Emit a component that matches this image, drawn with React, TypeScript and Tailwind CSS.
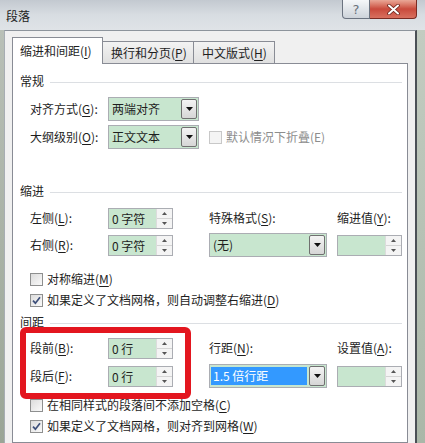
const Key = ({k}: {k: string}) => <span className="underline underline-offset-[2px]">{k}</span>

const Label = ({text, k, colon = true}: {text: string, k: string, colon?: boolean}) => (
    <span className="whitespace-nowrap">{text}(<Key k={k}/>){colon ? ":" : ""}</span>
)

const Heading = ({title}: {title: string}) => (
    <div className="flex items-center h-[16px] gap-[6px]">
        <span className="leading-[16px]">{title}</span>
        <div className="flex-1 h-px bg-[#dcdfe3] mt-[2px]"/>
    </div>
)

const Up = () => (
    <svg width="5" height="3" viewBox="0 0 5 3"><path d="M0 3 L2.5 0 L5 3 Z" fill="#555"/></svg>
)
const Down = () => (
    <svg width="5" height="3" viewBox="0 0 5 3"><path d="M0 0 L5 0 L2.5 3 Z" fill="#555"/></svg>
)

const Spin = ({value}: {value?: string}) => (
    <div className="flex w-[65px] h-[21px] border border-[#abadb3] bg-[#c8e6cf]">
        <div className="flex-1 pl-[3px] leading-[19px] whitespace-nowrap">{value}</div>
        <div className="w-[16px] flex flex-col bg-[#f4f4f4] border-l border-[#dcdcdc]">
            <div className="flex-1 flex items-center justify-center border-b border-[#d4d4d4]"><Up/></div>
            <div className="flex-1 flex items-center justify-center"><Down/></div>
        </div>
    </div>
)

const Dropdown = ({value, className, selected}: {value: string, className: string, selected?: boolean}) => (
    <div className={`flex h-[24px] border border-[#abadb3] bg-[#c8e6cf] ${className}`}>
        <div className="flex-1 flex items-center pl-[1px] pr-[2px]">
            {selected
                ? <span className="flex-1 bg-[#3399ff] text-white leading-[18px] pl-[2px]">{value}</span>
                : <span className="pl-[2px] leading-[18px]">{value}</span>}
        </div>
        <div className="w-[16px] my-px mr-px border border-[#707070] rounded-[2px] bg-gradient-to-b from-[#f4f4f4] to-[#d6d6d6] flex items-center justify-center">
            <svg width="7" height="4" viewBox="0 0 7 4"><path d="M0 0 L7 0 L3.5 4 Z" fill="#111"/></svg>
        </div>
    </div>
)

const Check = ({checked, disabled}: {checked?: boolean, disabled?: boolean}) => (
    <div className={`w-[13px] h-[13px] border flex items-center justify-center shrink-0 ${disabled ? "border-[#c8c8c8] bg-[#f4f4f4]" : "border-[#8e8f8f] bg-gradient-to-br from-[#dcdcdc] to-[#fafafa]"}`}>
        {checked && (
            <svg width="9" height="9" viewBox="0 0 9 9">
                <path d="M1 4.6 L3.4 7.2 L8 1.2" fill="none" stroke="#3d4f7a" strokeWidth="1.7"/>
            </svg>
        )}
    </div>
)

const CheckRow = ({checked, children, className}: {checked?: boolean, children: React.ReactNode, className: string}) => (
    <div className={`flex items-center gap-[4px] ml-[10px] h-[18px] whitespace-nowrap ${className}`}>
        <Check checked={checked}/>
        <span className="leading-[18px]">{children}</span>
    </div>
)

const Row = ({children, className}: {children: React.ReactNode, className: string}) => (
    <div className={`grid grid-cols-[78px_101px_128px_65px] items-center ml-[10px] ${className}`}>{children}</div>
)

export default function App() {
    return (
        <div className="w-[425px] h-[443px] overflow-hidden relative flex flex-col bg-[#d5dade] text-[12px] text-[#1e1e1e] font-['Noto_Sans_CJK_SC',sans-serif]">
            {/* title bar */}
            <div className="h-[30px] shrink-0 flex items-start bg-gradient-to-b from-[#c3c9d0] via-[#d8dde2] to-[#dfe3e7]">
                <div className="pl-[6px] pt-[7px] leading-[18px] text-[#222]">段落</div>
                <div className="ml-auto mr-[8px] flex">
                    <div className="w-[28px] h-[19px] border border-t-0 border-[#6b7380] rounded-bl-[4px] bg-gradient-to-b from-[#f5f7f9] to-[#cdd3da] flex items-center justify-center text-[13px] leading-none text-[#6a717a] font-['DejaVu_Sans',sans-serif]">?</div>
                    <div className="w-[47px] h-[19px] border border-t-0 border-l-0 border-[#7a2b23] rounded-br-[4px] bg-gradient-to-b from-[#e9a797] via-[#c94a3c] to-[#d8705f] flex items-center justify-center">
                        <svg width="13" height="11" viewBox="0 0 13 11">
                            <path d="M2 1.5 L11 9.5 M11 1.5 L2 9.5" stroke="#6a2219" strokeWidth="3.6" strokeLinecap="round"/>
                            <path d="M2 1.5 L11 9.5 M11 1.5 L2 9.5" stroke="#fff" strokeWidth="2" strokeLinecap="round"/>
                        </svg>
                    </div>
                </div>
            </div>

            <div className="flex flex-1 min-h-0">
                <div className="w-[4px] bg-gradient-to-b from-[#b9c0b7] to-[#9aa596]"/>
                <div className="flex-1 flex flex-col bg-[#f0f0f0] border-t border-l border-r-2 border-t-[#8d949c] border-l-[#a7adb3] border-r-[#4b5056] pt-[6px] pl-[7px] pr-[7px]">
                    {/* tabs */}
                    <div className="flex items-end h-[26px] shrink-0">
                        <div className="w-[91px] h-[27px] -mb-px relative z-10 bg-white border border-b-0 border-[#898c95] pl-[7px] pt-[4px] leading-[18px] whitespace-nowrap">
                            缩进和间距(<Key k="I"/>)
                        </div>
                        <div className="w-[92px] h-[22px] -ml-px border border-b-0 border-[#898c95] bg-gradient-to-b from-[#f3f3f3] to-[#e0e0e0] pl-[8px] flex items-center whitespace-nowrap">
                            换行和分页(<Key k="P"/>)
                        </div>
                        <div className="w-[82px] h-[22px] -ml-px border border-b-0 border-[#898c95] bg-gradient-to-b from-[#f3f3f3] to-[#e0e0e0] pl-[8px] flex items-center whitespace-nowrap">
                            中文版式(<Key k="H"/>)
                        </div>
                    </div>

                    {/* panel */}
                    <div className="flex-1 bg-white border border-[#898c95] pt-[9px] pl-[7px] pr-[5px] flex flex-col">
                        <Heading title="常规"/>
                        <Row className="mt-[8px] h-[23px]">
                            <Label text="对齐方式" k="G"/>
                            <Dropdown value="两端对齐" className="w-[91px] h-[23px]"/>
                        </Row>
                        <Row className="mt-[5px] h-[23px]">
                            <Label text="大纲级别" k="O"/>
                            <Dropdown value="正文文本" className="w-[91px] h-[23px]"/>
                            <div className="col-span-2 flex items-center gap-[4px] text-[#8d8d8d] whitespace-nowrap">
                                <Check disabled/>
                                <span>默认情况下折叠(E)</span>
                            </div>
                        </Row>

                        <div className="mt-[35px]"><Heading title="缩进"/></div>
                        <Row className="mt-[8px] h-[22px]">
                            <Label text="左侧" k="L"/>
                            <Spin value="0 字符"/>
                            <Label text="特殊格式" k="S"/>
                            <Label text="缩进值" k="Y"/>
                        </Row>
                        <Row className="mt-[4px] h-[24px]">
                            <Label text="右侧" k="R"/>
                            <Spin value="0 字符"/>
                            <Dropdown value="(无)" className="w-[118px]"/>
                            <Spin/>
                        </Row>
                        <CheckRow className="mt-[13px]">对称缩进(<Key k="M"/>)</CheckRow>
                        <CheckRow checked className="mt-[3px]">如果定义了文档网格，则自动调整右缩进(<Key k="D"/>)</CheckRow>

                        <div className="mt-[5px]"><Heading title="间距"/></div>
                        <Row className="mt-[7px] h-[22px]">
                            <Label text="段前" k="B"/>
                            <Spin value="0 行"/>
                            <Label text="行距" k="N"/>
                            <Label text="设置值" k="A"/>
                        </Row>
                        <Row className="mt-[5px] h-[24px]">
                            <Label text="段后" k="F"/>
                            <Spin value="0 行"/>
                            <Dropdown value="1.5 倍行距" className="w-[118px]" selected/>
                            <Spin/>
                        </Row>
                        <CheckRow className="mt-[8px]">在相同样式的段落间不添加空格(<Key k="C"/>)</CheckRow>
                        <CheckRow checked className="mt-[3px]">如果定义了文档网格，则对齐到网格(<Key k="W"/>)</CheckRow>
                    </div>
                </div>
                <div className="w-[8px] bg-gradient-to-b from-[#c3ccc1] to-[#aab7a8]"/>
            </div>

            {/* red annotation box */}
            <div className="absolute left-[20px] top-[327px] w-[171px] h-[72px] border-[6px] border-[#e3161f] rounded-[6px]"/>
        </div>
    )
}
